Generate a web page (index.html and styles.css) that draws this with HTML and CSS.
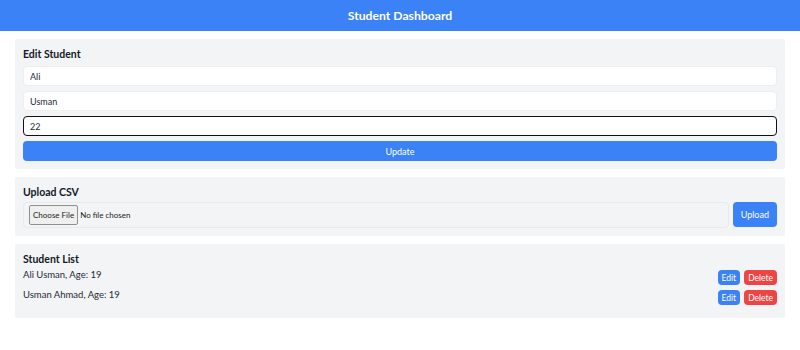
FILE: index.html
```html
<!DOCTYPE html>
<html lang="en">
  <head>
    <meta charset="utf8">
    <meta name="viewport" content="width=device-width, initial-scale=1">
    <title>Student Dashboard</title>
    <link rel="stylesheet" href="styles.css">
  </head>

  <body>
    <header class="top-bar">Student Dashboard</header>

    <main>
      <section class="card">
        <h2>Edit Student</h2>
        <form class="edit-form">
          <input type="text" class="field" value="Ali">
          <input type="text" class="field" value="Usman">
          <input type="number" class="field field-focus" value="22">
          <button type="button" class="btn btn-blue btn-wide">Update</button>
        </form>
      </section>

      <section class="card">
        <h2>Upload CSV</h2>
        <div class="upload-row">
          <div class="file-box"><input type="file" accept=".csv"></div>
          <button type="button" class="btn btn-blue btn-upload">Upload</button>
        </div>
      </section>

      <section class="card">
        <h2>Student List</h2>
        <ul class="student-list">
          <li>
            <span>Ali Usman, Age: 19</span>
            <span class="actions">
              <button type="button" class="btn btn-blue btn-small">Edit</button>
              <button type="button" class="btn btn-red btn-small">Delete</button>
            </span>
          </li>
          <li>
            <span>Usman Ahmad, Age: 19</span>
            <span class="actions">
              <button type="button" class="btn btn-blue btn-small">Edit</button>
              <button type="button" class="btn btn-red btn-small">Delete</button>
            </span>
          </li>
        </ul>
      </section>
    </main>
  </body>
</html>
```

FILE: styles.css
```css
:root {
  font-family: Lato, "Noto Sans", sans-serif;
  color: #1f2937;
}

body {
  margin: 0;
  background: #fff;
}

.top-bar {
  background: #3b82f6;
  color: #fff;
  text-align: center;
  font-weight: 700;
  font-size: 12.2px;
  line-height: 15px;
  padding: 8px 0;
}

main {
  padding: 8px 15px;
}

.card {
  background: #f3f4f6;
  border-radius: 2px;
  padding: 8px;
  margin-bottom: 8px;
}

h2 {
  font-size: 10.5px;
  font-weight: 700;
  line-height: 15px;
  margin: 0 0 4px;
  color: #111827;
}

.edit-form {
  display: flex;
  flex-direction: column;
  gap: 5px;
}

.field {
  box-sizing: border-box;
  height: 20px;
  width: 100%;
  border: 1px solid #eceef1;
  border-radius: 4px;
  padding: 0 6px;
  font-family: inherit;
  font-size: 9px;
  color: #1f2937;
  background: #fff;
  outline: none;
}

.field-focus {
  border: 1.5px solid #111;
}

.btn {
  font-family: inherit;
  border: 0;
  border-radius: 4px;
  color: #fff;
  font-size: 9px;
  cursor: pointer;
}

.btn-blue {
  background: #3b82f6;
}

.btn-red {
  background: #ef4444;
}

.btn-wide {
  height: 20px;
}

.upload-row {
  display: flex;
  gap: 4px;
  margin-top: -2px;
}

.file-box {
  flex: 1;
  height: 26px;
  box-sizing: border-box;
  border: 1px solid #e8eaed;
  border-radius: 4px;
  display: flex;
  align-items: center;
  padding: 0 5px;
}

.file-box input {
  font-family: inherit;
  font-size: 8px;
  color: #222;
}

.file-box input::file-selector-button {
  font-family: inherit;
  font-size: 8px;
  padding: 4px 3px;
  margin-right: 2px;
  border: 1px solid #8f8f8f;
  border-radius: 2px;
  background: #efefef;
  color: #222;
}

.btn-upload {
  height: 25px;
  padding: 0 8px;
}

.student-list {
  list-style: none;
  margin: -1px 0 0;
  padding: 0;
  font-size: 9.5px;
}

.student-list li {
  display: flex;
  justify-content: space-between;
  align-items: flex-start;
  height: 15px;
  margin-bottom: 5px;
  line-height: 10px;
}

.actions {
  display: flex;
  gap: 4px;
}

.btn-small {
  height: 15px;
  padding: 0 4px;
  font-size: 8.5px;
}
```
